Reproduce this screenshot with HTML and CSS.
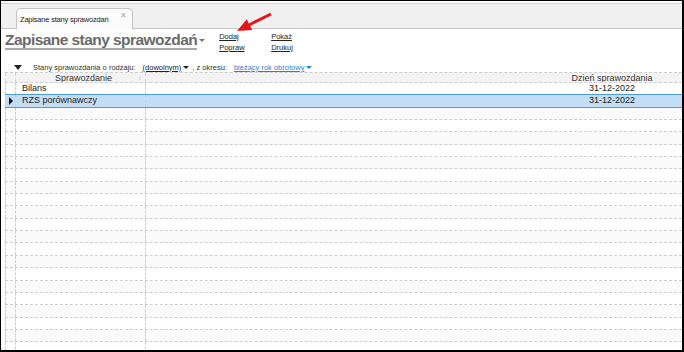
FILE: index.html
```html
<!DOCTYPE html>
<html lang="pl">
<head>
  <meta charset="UTF-8" />
  <title>Zapisane stany sprawozdań</title>
  <link rel="stylesheet" href="styles.css">
</head>
<body>
  <div class="frame">
    <div class="tabbar">
      <div class="tab">
        <span>Zapisane stany sprawozdań</span>
        <span class="tab-close">&#x2715;</span>
      </div>
    </div>

    <div class="toolbar">
      <h1 class="title">Zapisane stany sprawozdań</h1>
      <span class="caret caret-gray"></span>
      <div class="actions">
        <a href="#">Dodaj</a>
        <a href="#">Pokaż</a>
        <a href="#">Popraw</a>
        <a href="#">Drukuj</a>
      </div>
      <svg class="pointer" width="48" height="24" viewBox="0 0 48 24">
        <path d="M10 21 L19.8 9.3 L21.8 13.4 L43.3 2.7 L44.7 5.3 L23.2 16 L25.2 20.1 Z" fill="#e8141a" />
      </svg>
    </div>

    <div class="filter">
      <span class="caret caret-black big"></span>
      <span class="label">Stany sprawozdania o rodzaju:</span>
      <a class="pick" href="#">(dowolnym)</a><span class="caret caret-black"></span>
      <span class="label">, z okresu:</span>
      <a class="pick blue" href="#">bieżący rok obrotowy</a><span class="caret caret-blue"></span>
    </div>

    <div class="grid" id="grid">
      <div class="row head">
        <div class="cell ind"></div>
        <div class="cell name">Sprawozdanie<span class="sort">/</span></div>
        <div class="cell fill"></div>
        <div class="cell date">Dzień sprawozdania</div>
      </div>
      <div class="row">
        <div class="cell ind"></div>
        <div class="cell name">Bilans</div>
        <div class="cell fill"></div>
        <div class="cell date">31-12-2022</div>
      </div>
      <div class="row selected">
        <div class="cell ind"><span class="marker"></span></div>
        <div class="cell name">RZS porównawczy</div>
        <div class="cell fill"></div>
        <div class="cell date">31-12-2022</div>
      </div>
    </div>
  </div>

  <script>
    const grid = document.getElementById("grid");
    for (let i = 0; i < 21; i++) {
      const row = document.createElement("div");
      row.className = i % 2 === 0 ? "row empty alt" : "row empty";
      row.innerHTML = '<div class="cell ind"></div><div class="cell name"></div><div class="cell fill"></div><div class="cell date"></div>';
      grid.appendChild(row);
    }
  </script>
</body>
</html>
```

FILE: styles.css
```css
body {
  margin: 0;
  background: #fff;
  font-family: "Liberation Sans", Arial, sans-serif;
  color: #222;
}

.frame {
  width: 684px;
  height: 352px;
  box-sizing: border-box;
  border: 1px solid #000;
  border-right-width: 2px;
  border-bottom-width: 2px;
  overflow: hidden;
  position: relative;
}

.tabbar {
  margin-top: 2px;
  height: 24px;
  background: #f0f0f0;
  border-top: 1px solid #d4d4d4;
  border-bottom: 1px solid #c4c4c4;
  padding-left: 15px;
  display: flex;
  align-items: flex-end;
}

.tab {
  width: 117px;
  height: 21px;
  box-sizing: border-box;
  margin-bottom: -1px;
  background: #fbfbfb;
  border: 1px solid #c4c4c4;
  border-bottom: none;
  border-radius: 5px 5px 0 0;
  display: flex;
  align-items: center;
  justify-content: space-between;
  padding: 0 5px 0 3px;
  font-size: 7.5px;
  letter-spacing: -0.2px;
  color: #222;
}

.tab-close {
  font-size: 8px;
  color: #aaa;
  margin-top: -8px;
}

.toolbar {
  position: relative;
  display: flex;
  align-items: flex-start;
  height: 33px;
  padding-left: 4px;
}

.title {
  margin: 2px 0 0;
  font-size: 15.5px;
  font-weight: bold;
  color: #6a6a6a;
  letter-spacing: -0.55px;
  border-bottom: 2px solid #a8a8a8;
  line-height: 17px;
  height: 17px;
}

.actions {
  display: grid;
  grid-template-columns: 52px 40px;
  row-gap: 1px;
  margin: 3px 0 0 11px;
  font-size: 7.5px;
}

.actions a {
  color: #222;
  text-decoration: underline;
  line-height: 10px;
}

.pointer {
  position: absolute;
  left: 226px;
  top: -19px;
}

.caret {
  display: inline-block;
  width: 0;
  height: 0;
  border-left: 3px solid transparent;
  border-right: 3px solid transparent;
  border-top: 3px solid #222;
  vertical-align: middle;
  margin: 0 3px 0 2px;
}

.caret-gray {
  border-top-color: #777;
  margin-top: 10px;
}

.caret-blue {
  border-top-color: #2f7fd8;
}

.caret.big {
  border-left-width: 4px;
  border-right-width: 4px;
  border-top-width: 5px;
  margin: 0 11px 0 11px;
}

.filter {
  display: flex;
  align-items: center;
  height: 10px;
  font-size: 7.5px;
  color: #333;
  padding-left: 2px;
}

.filter .label {
  margin-right: 7px;
}

.filter .pick {
  color: #222;
  text-decoration: underline;
}

.filter .pick.blue {
  color: #2f7fd8;
}

.grid {
  margin-left: 4px;
}

.row {
  display: flex;
  height: 12.35px;
  box-sizing: border-box;
  border-bottom: 1px dashed #cfcfcf;
  font-size: 9px;
  line-height: 11px;
}

.row.alt {
  background: #fafafa;
}

.row.head {
  height: 11px;
  background: #f3f3f3;
  border-top: 1px dashed #cfcfcf;
  color: #333;
  line-height: 10px;
}

.row.selected {
  background: #c2ddf4;
  border-top: 1px solid #4a9be3;
  border-bottom: 1px solid #4a9be3;
  margin-top: -1px;
  height: 13.35px;
}

.cell {
  box-sizing: border-box;
  border-right: 1px dashed #cfcfcf;
  overflow: hidden;
  white-space: nowrap;
}

.ind {
  width: 11px;
  border-left: 1px dashed #cfcfcf;
  display: flex;
  align-items: center;
  justify-content: center;
}

.name {
  width: 130px;
  padding-left: 6px;
  position: relative;
}

.head .name {
  text-align: center;
}

.sort {
  position: absolute;
  right: 4px;
  top: 0;
  font-size: 6px;
  color: #bbb;
}

.fill {
  flex: 1;
  border-right: none;
}

.date {
  width: 140px;
  border-right: none;
  text-align: center;
}

.marker {
  width: 0;
  height: 0;
  border-top: 4px solid transparent;
  border-bottom: 4px solid transparent;
  border-left: 4px solid #111;
}
```
